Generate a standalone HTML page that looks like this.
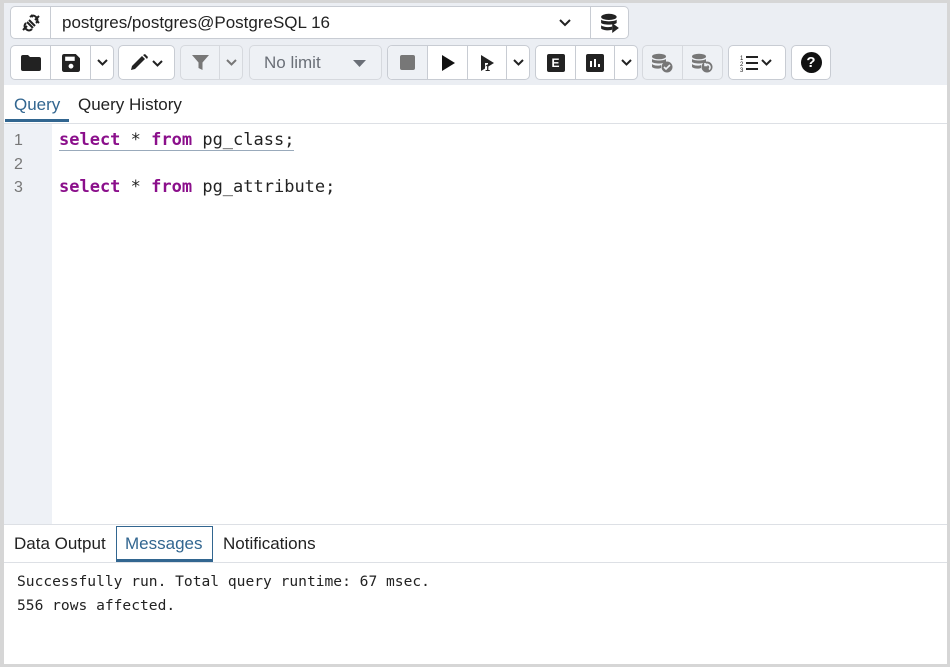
<!DOCTYPE html>
<html><head><meta charset="utf-8"><style>
*{box-sizing:border-box;margin:0;padding:0}
body{width:950px;height:667px;overflow:hidden;background:#fff;font-family:"Liberation Sans",sans-serif;position:relative}
.frame{position:absolute;left:0;top:0;width:950px;height:667px;border:solid #d6d6d6;border-width:3px 3px 3px 4px}
.bar{position:absolute;left:4px;top:3px;width:943px;height:82px;background:#ebeef3}
.b{position:absolute;border:1px solid #c8ccd3;border-radius:5px;background:#fff;display:flex}
.b.d{background:#eef1f5;border-color:#d6d9de}
.c{height:100%;display:flex;align-items:center;justify-content:center;border-right:1px solid #c8ccd3}
.c:last-child{border-right:none}
.b.d .c{border-color:#d6d9de}
.mono{font-family:"DejaVu Sans Mono","Liberation Mono",monospace}
.abs{position:absolute}
</style></head><body>
<div class="bar"></div>
<div class="b" style="left:10px;top:6px;width:619px;height:33px">
 <div class="c" style="width:40px"><svg width="22" height="20" viewBox="0 0 22 20" fill="none" stroke="#222" stroke-width="2"><path d="M3 17l4-4M19 3l-4 4M7 9l6 6M9 7l6 6M6 10c-2 2-2 4 0 6s4 2 6 0M16 10c2-2 2-4 0-6s-4-2-6 0M11 2l2 2M17 8l2 2"/></svg></div>
 <div class="c" style="width:540px;justify-content:flex-start;padding-left:11px;font-size:17px;color:#222">postgres/postgres@PostgreSQL 16<svg style="position:absolute;left:548px" width="12" height="8" viewBox="0 0 12 8"><path d="M1 1l5 5 5-5" stroke="#222" stroke-width="2" fill="none"/></svg></div>
 <div class="c" style="width:37px"><svg width="20" height="20" viewBox="0 0 18 18" fill="#222"><ellipse cx="8" cy="3.5" rx="7" ry="2.8"/><path d="M1 6c2 2 12 2 14 0v3c-2 2-12 2-14 0zM1 11c2 2 9 2 10 1v3c-2 1-8 1-10-1z"/><path d="M11 9l6 4.5-6 4.5z"/></svg></div>
</div>
<div class="b" style="left:10px;top:45px;width:104px;height:35px">
 <div class="c" style="width:40px"><svg width="20" height="16" viewBox="0 0 20 16" fill="#222"><path d="M0 2a2 2 0 012-2h5l2 2h9a2 2 0 012 2v10a2 2 0 01-2 2H2a2 2 0 01-2-2z"/></svg></div>
 <div class="c" style="width:40px"><svg width="18" height="18" viewBox="0 0 17 17" fill="#222"><path d="M0 2a2 2 0 012-2h11l4 4v11a2 2 0 01-2 2H2a2 2 0 01-2-2z"/><rect x="3" y="2.5" width="9" height="4" fill="#fff"/><circle cx="8.5" cy="11.5" r="2.3" fill="#fff"/></svg></div>
 <div class="c" style="width:22px"><svg width="11" height="7" viewBox="0 0 11 7"><path d="M1 1l4.5 4.5L10 1" stroke="#222" stroke-width="2" fill="none"/></svg></div>
</div>
<div class="b" style="left:118px;top:45px;width:57px;height:35px"><div class="c" style="width:100%"><svg width="36" height="18" viewBox="0 0 36 18"><path d="M2 16l1-4L13 2l3 3L6 15z" fill="#222"/><path d="M14 1l2-1 3 3-1 2z" fill="#222"/><path d="M24 7l4.5 4.5L33 7" stroke="#222" stroke-width="2" fill="none"/></svg></div></div>
<div class="b d" style="left:180px;top:45px;width:63px;height:35px">
 <div class="c" style="width:40px"><svg width="17" height="17" viewBox="0 0 17 17" fill="#777"><path d="M0 1h17l-6.5 7.5V16l-4-2V8.5z"/></svg></div>
 <div class="c" style="width:22px"><svg width="11" height="7" viewBox="0 0 11 7"><path d="M1 1l4.5 4.5L10 1" stroke="#777" stroke-width="2" fill="none"/></svg></div>
</div>
<div class="b d" style="left:249px;top:45px;width:133px;height:35px;align-items:center;padding-left:14px;font-size:17px;color:#6a6f77">No limit<svg style="position:absolute;left:103px;top:14px" width="13" height="7" viewBox="0 0 13 7"><path d="M0 0h13L6.5 7z" fill="#6a6f77"/></svg></div>
<div class="b" style="left:387px;top:45px;width:143px;height:35px">
 <div class="c" style="width:40px;background:#eef1f5;border-radius:5px 0 0 5px"><div style="width:15px;height:15px;background:#777;border-radius:2px"></div></div>
 <div class="c" style="width:40px"><svg width="14" height="16" viewBox="0 0 14 16"><path d="M1 0l13 8-13 8z" fill="#111"/></svg></div>
 <div class="c" style="width:39px"><svg width="16" height="18" viewBox="0 0 16 18"><path d="M2 1l13 8-13 8z" fill="#222"/><path d="M6 17v-8h3v8" fill="#fff"/><text x="6" y="17" font-size="9" font-family="Liberation Sans" font-weight="bold" fill="#222">1</text></svg></div>
 <div class="c" style="width:22px"><svg width="11" height="7" viewBox="0 0 11 7"><path d="M1 1l4.5 4.5L10 1" stroke="#222" stroke-width="2" fill="none"/></svg></div>
</div>
<div class="b" style="left:535px;top:45px;width:103px;height:35px">
 <div class="c" style="width:40px"><div style="width:18px;height:18px;background:#222;border-radius:2px;color:#fff;font-size:12px;font-weight:bold;display:flex;align-items:center;justify-content:center">E</div></div>
 <div class="c" style="width:39px"><svg width="18" height="18" viewBox="0 0 18 18"><rect width="18" height="18" rx="2" fill="#222"/><path d="M5 7v6M9 5v8M13 10v3" stroke="#fff" stroke-width="2"/></svg></div>
 <div class="c" style="width:22px"><svg width="11" height="7" viewBox="0 0 11 7"><path d="M1 1l4.5 4.5L10 1" stroke="#222" stroke-width="2" fill="none"/></svg></div>
</div>
<div class="b d" style="left:642px;top:45px;width:81px;height:35px">
 <div class="c" style="width:40px"><svg width="22" height="20" viewBox="0 0 22 20" fill="#777"><ellipse cx="8" cy="3.5" rx="7" ry="2.8"/><path d="M1 6c2 2 12 2 14 0v3c-2 2-12 2-14 0zM1 11c2 2 8 2 9 1v3c-2 1-7 1-9-1z"/><circle cx="16" cy="14" r="5.5"/><path d="M13 14l2 2 4-4" stroke="#eef1f5" stroke-width="1.6" fill="none"/></svg></div>
 <div class="c" style="width:40px"><svg width="22" height="20" viewBox="0 0 22 20" fill="#777"><ellipse cx="8" cy="3.5" rx="7" ry="2.8"/><path d="M1 6c2 2 12 2 14 0v3c-2 2-12 2-14 0zM1 11c2 2 8 2 9 1v3c-2 1-7 1-9-1z"/><circle cx="16" cy="14" r="5.5"/><path d="M14 12a3 3 0 114 4.5M14 10v2.5h2.5" stroke="#eef1f5" stroke-width="1.6" fill="none"/></svg></div>
</div>
<div class="b" style="left:728px;top:45px;width:58px;height:35px"><div class="c" style="width:100%"><svg width="34" height="18" viewBox="0 0 34 18"><text x="0" y="6" font-size="6" font-family="Liberation Sans" fill="#222">1</text><text x="0" y="12" font-size="6" font-family="Liberation Sans" fill="#222">2</text><text x="0" y="18" font-size="6" font-family="Liberation Sans" fill="#222">3</text><path d="M6 3h12M6 9h12M6 15h12" stroke="#222" stroke-width="2"/><path d="M22 6l4.5 4.5L31 6" stroke="#222" stroke-width="2" fill="none"/></svg></div></div>
<div class="b" style="left:791px;top:45px;width:40px;height:35px"><div class="c" style="width:100%"><div style="width:21px;height:21px;border-radius:50%;background:#111;color:#fff;font-weight:bold;font-size:15px;display:flex;align-items:center;justify-content:center">?</div></div></div>
<div class="abs" style="left:14px;top:95px;font-size:17px;color:#326690">Query</div>
<div class="abs" style="left:5px;top:119px;width:64px;height:3px;background:#326690"></div>
<div class="abs" style="left:78px;top:95px;font-size:17px;color:#222">Query History</div>
<div class="abs" style="left:4px;top:123px;width:943px;height:1px;background:#dde0e5"></div>
<div class="abs" style="left:4px;top:124px;width:48px;height:401px;background:#eef1f6"></div>
<div class="abs mono" style="left:0;top:129px;width:950px;font-size:17px;line-height:23.5px;color:#222">
 <div style="position:absolute;left:14px;color:#777;font-family:'Liberation Sans',sans-serif;font-size:16px">1<br>2<br>3</div>
 <div style="position:absolute;left:59px;white-space:pre"><span style="border-bottom:1px solid #9ab;"><b style="color:#8b0f8b">select</b> * <b style="color:#8b0f8b">from</b> pg_class;</span>

<b style="color:#8b0f8b">select</b> * <b style="color:#8b0f8b">from</b> pg_attribute;</div>
</div>
<div class="abs" style="left:4px;top:524px;width:943px;height:1px;background:#dde0e5"></div>
<div class="abs" style="left:14px;top:534px;font-size:17px;color:#222">Data Output</div>
<div class="abs" style="left:116px;top:526px;width:97px;height:36px;border:1px solid #326690;border-bottom:3px solid #326690"></div>
<div class="abs" style="left:125px;top:534px;font-size:17px;color:#326690">Messages</div>
<div class="abs" style="left:223px;top:534px;font-size:17px;color:#222">Notifications</div>
<div class="abs" style="left:4px;top:562px;width:943px;height:1px;background:#dde0e5"></div>
<div class="abs mono" style="left:17px;top:570px;font-size:14.6px;line-height:24px;color:#222;white-space:pre">Successfully run. Total query runtime: 67 msec.
556 rows affected.</div>
<div class="frame"></div>
</body></html>
